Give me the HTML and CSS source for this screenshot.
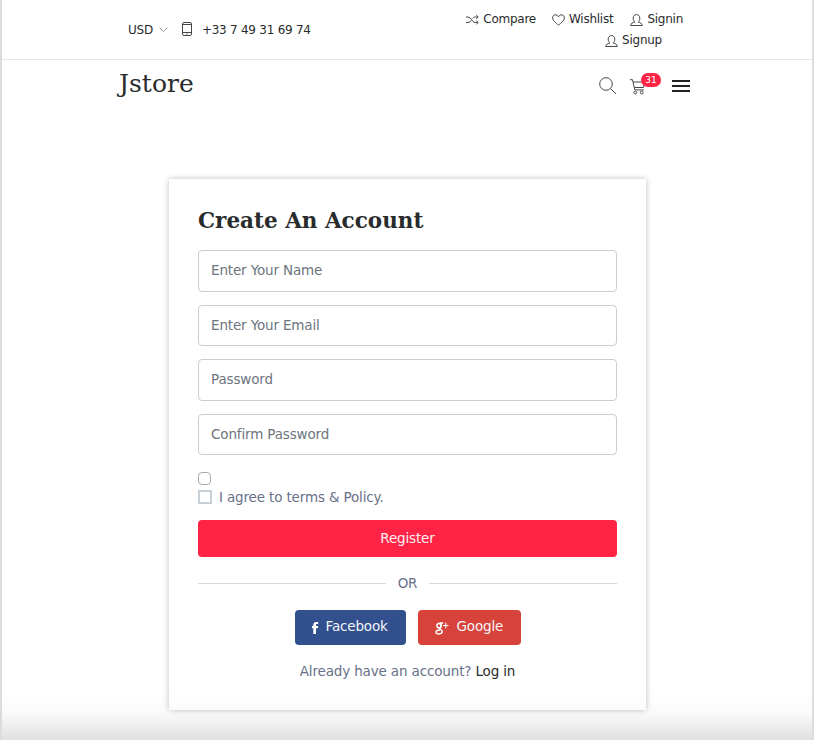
FILE: index.html
```
<!DOCTYPE html>
<html lang="en">
<head>
<meta charset="utf-8">
<title>Jstore</title>
<link rel="stylesheet" href="styles.css">
</head>
<body>
<div class="page">
  <div class="topbar">
    <div class="contact">
      <span>USD</span>
      <svg class="chevron" width="9" height="6" viewBox="0 0 9 6"><path d="M.7.7l3.8 4 3.8-4"/></svg>
      <svg class="phone" width="10" height="14" viewBox="0 0 10 14"><rect x=".5" y=".5" width="9" height="13" rx="1.5"/><path d="M.5 2.5h9M.5 10.500h9M4.300 12h1.400"/></svg>
      <span>+33 7 49 31 69 74</span>
    </div>
    <div class="account">
      <div class="links">
        <a class="compare"><svg width="13" height="12" viewBox="0 0 13 12"><path d="M0 3h2c3.500 0 4 5.500 7 5.500h3M0 8.500h2c1.500 0 2.400-1 3.200-2.200M6.500 4.500C7.200 3.600 8 3 9.200 3H12M10.300 1.200L12.200 3l-1.900 1.800M10.300 6.700l1.900 1.800-1.900 1.800"/></svg>Compare</a>
        <a class="wishlist"><svg width="13" height="12" viewBox="0 0 13 12"><path d="M6.500 11.200C4 8.800.6 6.600.6 3.900.6.4 4.900-.3 6.500 2.800c1.600-3.100 5.900-2.400 5.900 1.100 0 2.700-3.400 4.900-5.900 7.300z"/></svg>Wishlist</a>
        <a><svg width="13" height="12" viewBox="0 0 13 12"><path d="M.7 11.500h11.600c0-2.300-2-2.700-4.200-3.400 1.300-1 1.700-2.300 1.700-4 0-2.100-1.200-3.500-3.300-3.500S3.200 2 3.200 4.100c0 1.700.4 3 1.700 4C2.700 8.800.7 9.200.7 11.500z"/></svg>Signin</a>
      </div>
      <div class="links second">
        <a><svg width="13" height="12" viewBox="0 0 13 12"><path d="M.7 11.500h11.600c0-2.300-2-2.700-4.200-3.400 1.300-1 1.700-2.300 1.700-4 0-2.100-1.200-3.500-3.300-3.500S3.200 2 3.200 4.100c0 1.700.4 3 1.700 4C2.700 8.800.7 9.200.7 11.500z"/></svg>Signup</a>
      </div>
    </div>
  </div>
  <div class="navbar">
    <div class="logo">Jstore</div>
    <div class="tools">
      <svg class="search" width="18" height="18" viewBox="0 0 18 18"><circle cx="7" cy="7" r="6.300"/><path d="M11.500 11.500l5.500 5.500"/></svg>
      <div class="cart">
        <svg width="16" height="16" viewBox="0 0 16 16"><path d="M0 .7h2.500l2.300 10.200h9M3 3h11.500l-1 5.500H4.300"/><circle cx="5.300" cy="13.500" r="1.400"/><circle cx="11.700" cy="13.500" r="1.400"/></svg>
        <span class="badge">31</span>
      </div>
      <div class="menu"><i></i><i></i><i></i></div>
    </div>
  </div>
  <form class="card">
    <h1>Create An Account</h1>
    <input class="field" type="text" placeholder="Enter Your Name">
    <input class="field" type="text" placeholder="Enter Your Email">
    <input class="field" type="password" placeholder="Password">
    <input class="field" type="password" placeholder="Confirm Password">
    <span class="check"></span>
    <label class="terms"><span class="box"></span>I agree to terms &amp; Policy.</label>
    <button class="register" type="button">Register</button>
    <div class="divider"><span>OR</span></div>
    <div class="social">
      <a class="facebook"><svg width="7" height="12" viewBox="0 0 7 12"><path d="M1.300 12V6.300H0V4h1.300V2.900C1.300 1 2.400 0 4.300 0h1.900v2.100H5c-.8 0-1 .4-1 1V4h2.200l-.3 2.300H4V12z"/></svg>Facebook</a>
      <a class="google"><svg width="14" height="13" viewBox="0 0 14 13"><g class="outline"><ellipse cx="4" cy="3.700" rx="2.100" ry="2.300"/><path d="M4.500 1h3.800M5.500 1.500c1.700 2.500.2 3.600-.8 4.600-.9 1 2.500 1.600 2.500 3.500 0 3-6.200 3.200-6.200.6 0-1.900 2-2.300 4-2.300"/></g><path class="plus" d="M8 3.500h5.500M10.750.8v5.400"/></svg>Google</a>
    </div>
    <p class="login">Already have an account? <a>Log in</a></p>
  </form>
  <div class="fade"></div>
</div>
</body>
</html>
```
FILE: styles.css
```
* { box-sizing: border-box; }
body { margin: 0; background: #fff; color: #292b2c; font-family: "DejaVu Sans", sans-serif; font-size: 13.5px; letter-spacing: -.15px; }
svg { fill: none; stroke: #45484b; stroke-width: 1; flex: none; }
.page { position: relative; width: 814px; height: 740px; overflow: hidden; border: solid #dcdcdc; border-width: 0 2px; }
.topbar { display: flex; justify-content: space-between; height: 60px; padding: 9px 129px 0 126px; border-bottom: 1px solid #e6e6e6; font-size: 12px; letter-spacing: -.25px; line-height: 21px; }
.contact { display: flex; align-items: center; height: 43px; white-space: nowrap; }
.chevron { margin: -1px 14px 0 6px; stroke: #999; }
.phone { margin: -3px 10px 0 0; }
.links { display: flex; justify-content: flex-end; }
.links a { display: flex; align-items: center; gap: 4px; }
.links svg { margin-top: 0; }
.compare { margin-right: 16px; }
.wishlist { margin-right: 17px; }
.second { padding-right: 21px; }
.navbar { display: flex; justify-content: space-between; height: 51px; padding: 0 122px 0 117px; }
.logo { font: 25px/48px "DejaVu Serif", serif; letter-spacing: 0; }
.tools { display: flex; align-items: flex-start; padding-top: 17px; }
.search { margin: 0 13px 0 -1px; }
.cart { position: relative; width: 42px; padding-top: 2px; }
.badge { position: absolute; left: 11px; top: -4px; width: 20px; height: 14px; border-radius: 7px; background: #ff2446; color: #fff; font-size: 9px; letter-spacing: 0; line-height: 14px; text-align: center; }
.menu { display: flex; flex-direction: column; gap: 3px; padding-top: 3px; }
.menu i { width: 18px; height: 2px; background: #222; }
.card { width: 477px; height: 531px; margin: 68px 0 0 167px; padding: 29px 29px 0; background: #fff; box-shadow: 0 0 6px rgba(0, 0, 0, .26); color: #687188; }
h1 { margin: 0 0 16px; color: #292b2c; font: bold 21.5px/26px "DejaVu Serif", serif; letter-spacing: 0; }
.field { display: block; width: 419px; height: 41.5px; margin: 0 0 13px; padding: 0 12px 1px; border: 1px solid #c8ced4; border-radius: 4px; background: #fff; font: 13.5px "DejaVu Sans", sans-serif; letter-spacing: -.15px; }
.field::placeholder { color: #6c757d; opacity: 1; }
.check { display: block; width: 13px; height: 13px; margin-top: 17px; border: 1px solid #aaa; border-radius: 4px; }
.terms { display: flex; align-items: center; height: 20px; margin-top: 2px; }
.box { width: 14px; height: 14px; margin-right: 7px; border: 2px solid #c8d0d6; }
.register { display: block; width: 419px; height: 37px; margin: 13px 0 0; padding: 0 0 2px; border: 0; border-radius: 4px; background: #ff2446; color: #ffeef1; font: 13.5px "DejaVu Sans", sans-serif; letter-spacing: -.15px; }
.divider { display: flex; align-items: center; gap: 12px; height: 20px; margin-top: 16px; }
.divider::before, .divider::after { content: ""; flex: 1; height: 1px; background: #d8d8d8; }
.social { display: flex; justify-content: center; gap: 12px; margin: 17px 0 0; }
.social a { display: flex; align-items: center; height: 35px; padding: 0 17px 3px; border-radius: 4px; color: #f4f5f8; }
.facebook { width: 111px; gap: 7px; background: #32508e; }
.google { width: 103px; gap: 8px; background: #d7433b; }
.social svg { margin-top: 4px; fill: #fff; stroke: none; }
.social .outline, .social .plus { fill: none; stroke: #fff; stroke-width: 1.5; }
.social .plus { stroke-width: 1.1; }
.login { margin: 16px 0 0; line-height: 20px; text-align: center; }
.login a { color: #292b2c; }
.fade { position: absolute; left: 0; right: 0; bottom: 0; height: 48px; background: linear-gradient(rgba(0,0,0,0), rgba(0,0,0,.02) 45%, rgba(0,0,0,.12)); }
```
